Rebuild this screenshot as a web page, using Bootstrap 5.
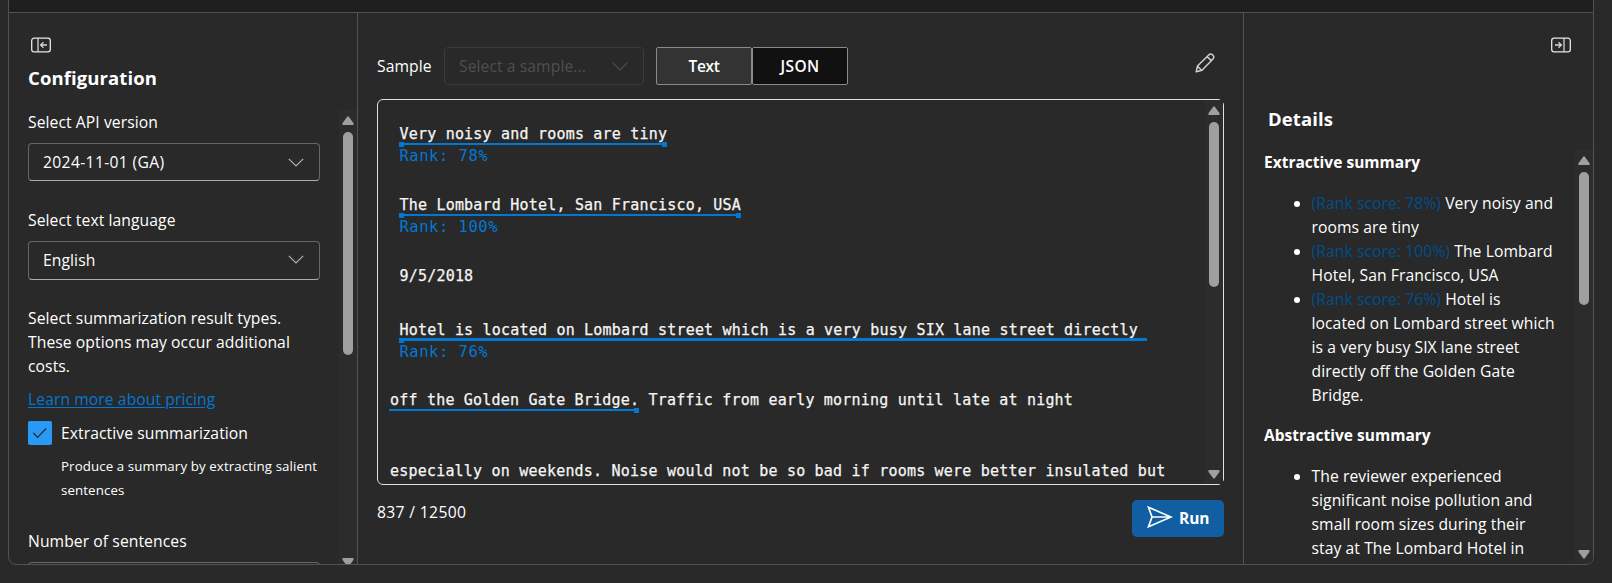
<!DOCTYPE html>
<html lang="en" data-bs-theme="dark">
<head>
<meta charset="utf-8">
<title>Summarization playground</title>
<link rel="stylesheet" href="https://cdn.jsdelivr.net/npm/bootstrap@5.3.0/dist/css/bootstrap.min.css">
<script src="https://cdn.jsdelivr.net/npm/bootstrap@5.3.0/dist/js/bootstrap.bundle.min.js"></script>
<style>
  html,body{height:583px;overflow:hidden}
  body{background:#292929;color:#fff;font-family:"Open Sans","Noto Sans",sans-serif;font-size:15.7px;line-height:24px;letter-spacing:.07px;padding:0 18px 0 8px;white-space:nowrap}
  .topstrip{height:12px;background:#1f1f1f;border:solid #525252;border-width:0 1px}
  .shell{height:553px;border:1px solid #525252;border-radius:0 0 8px 8px;overflow:hidden}
  .side-l{width:349px;border-right:1px solid #525252;padding-left:19px}
  .side-r{width:350px;border-left:1px solid #525252;padding-left:20px}
  .center{padding:34px 19px 0}
  .h-title{font-size:18.5px;line-height:28px;font-weight:700;letter-spacing:.1px;margin:0}
  .sub{font-size:15.5px;line-height:24px;font-weight:700;letter-spacing:.02px;margin:0}
  .pick{height:38px;border:1px solid #666;border-bottom-color:#adadad;border-radius:4px;padding:0 15px 0 14px}
  .pick.off{width:200px;border-color:#3b3b3b;color:#4f4f4f}
  .pick.tall{height:39px;padding-bottom:2px}
  .digits{letter-spacing:.33px}
  .form-w{width:292px}
  .view{width:96px;height:38px;border:1px solid #8a8a8a;border-radius:2px;background:#333;color:#fff;font-size:15.5px;font-weight:600;letter-spacing:-.35px;padding:1px 0 0;text-align:center;line-height:35px}
  .view.json{background:#111;letter-spacing:.4px}
  .tick{width:24px;height:24px;border-radius:2px;background:#2899f5}
  .note{font-size:13.3px;letter-spacing:.1px;margin:9px 0 27px 33px}
  .lnk{color:#0078d4;text-decoration:underline;text-underline-offset:2px}
  .sbar{width:18px;background:#2c2c2c;flex:none}
  .sbar svg{display:block;margin:6px 0 7px 3px}
  .thumb{width:10px;margin-left:4px;border-radius:5px;background:#9f9f9f}
  .sbar .down{margin:auto 0 5px 3px}
  .editor{height:386px;margin-top:14px;border:1px solid #e0e0e0;border-radius:6px;font-family:"DejaVu Sans Mono","Liberation Mono",monospace;font-size:15px;line-height:20px;letter-spacing:.2px;color:#f5f5f5;-webkit-text-stroke:.25px #f5f5f5}
  .editor .sbar{position:relative}
  .editor .sbar::before,.editor .sbar::after{content:"";position:absolute;right:-1px;width:4px;height:4px;background:#292929}
  .editor .sbar::before{top:-1px}
  .editor .sbar::after{bottom:-1px}
  .lines{padding:24px 0 0 12px}
  .ln{height:71px}
  .ind{padding-left:9.5px}
  .seg{position:relative;display:inline-block;white-space:pre;height:20px;vertical-align:top}
  .seg::before{content:"";position:absolute;left:-1px;right:0;top:19px;height:2px;background:#0078d4}
  .seg.thick::before{top:18px;height:3px}
  .seg i{position:absolute;top:18px;width:5px;height:5px;background:#0078d4}
  .seg i.s{left:-1px}
  .seg i.e{right:0}
  .rank{color:#0078d4;font-size:15.5px;letter-spacing:.52px;margin-top:2px;-webkit-text-stroke:0}
  .run{width:92px;height:37px;background:#115ea3;border-radius:5px;font-size:15.5px;font-weight:700;letter-spacing:-.1px;margin-top:15px;padding-left:15px}
  .res{margin:0;padding-left:47.500px}
  .res em{font-style:normal;color:#004e8c}
  .ic-left{margin-left:3px}
  #cfg{margin:11px 0 18px}
  #p1{margin:9px 0 27px}
  #p2{margin:9px 0 26px}
  #price{margin:9px 0 10px}
  #p3{margin-top:9px}
  #chkText{margin-left:1px}
  .t1{height:223px}
  .t2{height:165px}
  .t3{height:133px}
  .sbar .d1{margin-bottom:-3px}
  #sample{width:67px}
  #vt{margin-left:12px}
  #pen{margin-right:9px;margin-top:-6px}
  #date{height:54px}
  #hotel{height:70px}
  #count{margin-top:15px}
  #runText{margin:-1px 0 0 6px}
  #ricon{margin-right:22px}
  #det{margin:52px 0 17px 4px}
  #u1{margin:17px 0 16px}
  #u2{margin-top:17px}
</style>
</head>
<body>
<svg width="0" height="0" class="d-none">
  <symbol id="up" viewBox="0 0 12 9"><path d="M5 1q1-1.4 2 0l4.4 6.1q.9 1.9-1 1.9H1.600q-1.900 0-1-1.900z" fill="#9f9f9f"/></symbol>
  <symbol id="chev" viewBox="0 0 16 9"><path d="M.8.8 8 8l7.200-7.200" fill="none" stroke="currentColor" stroke-width="1.200"/></symbol>
  <symbol id="panel" viewBox="0 0 20 16"><rect x=".7" y="1.200" width="18.600" height="13.600" rx="2.400" fill="none" stroke="#e8e8e8" stroke-width="1.300"/><path d="M7 1v14M16 8h-6M12.500 5.300 9.600 8l2.900 2.700" fill="none" stroke="#d6d6d6" stroke-width="1.300"/></symbol>
</svg>
<div class="topstrip"></div>
<main class="shell d-flex">
  <aside class="side-l d-flex flex-column">
    <svg width="20" height="16" class="flex-shrink-0 mt-4 ic-left"><use href="#panel"/></svg>
    <h1 class="h-title" id="cfg">Configuration</h1>
    <div class="d-flex justify-content-between flex-grow-1 overflow-hidden">
      <div class="form-w">
        <div>Select API version</div>
        <div class="pick d-flex align-items-center justify-content-between" id="p1"><span class="digits">2024-11-01 (GA)</span><svg width="16" height="9" color="#b0b0b0"><use href="#chev"/></svg></div>
        <div>Select text language</div>
        <div class="pick tall d-flex align-items-center justify-content-between" id="p2"><span>English</span><svg width="16" height="9" color="#b0b0b0"><use href="#chev"/></svg></div>
        <div>Select summarization result types.<br>These options may occur additional<br>costs.</div>
        <div id="price"><a class="lnk" href="#">Learn more about pricing</a></div>
        <div class="d-flex"><span class="tick me-2"><svg class="d-block" width="24" height="24"><path d="m5.500 12 4 4.300 8.800-8.900" fill="none" stroke="#252525" stroke-width="1.200"/></svg></span><span id="chkText">Extractive summarization</span></div>
        <div class="note">Produce a summary by extracting salient<br>sentences</div>
        <div>Number of sentences</div>
        <div class="pick" id="p3"></div>
      </div>
      <div class="sbar d-flex flex-column"><svg width="12" height="9" class="flex-shrink-0"><use href="#up"/></svg><div class="thumb t1 flex-shrink-0"></div><svg class="down d1 flex-shrink-0" width="12" height="9"><g transform="rotate(180 6 4.500)"><use href="#up" width="12" height="9"/></g></svg></div>
    </div>
  </aside>
  <section class="center flex-grow-1">
    <div class="d-flex align-items-center">
      <span id="sample">Sample</span>
      <div class="pick off d-flex align-items-center justify-content-between"><span>Select a sample...</span><svg width="16" height="9"><use href="#chev"/></svg></div>
      <button class="view" id="vt">Text</button><button class="view json">JSON</button>
      <svg class="ms-auto" id="pen" width="20" height="20" viewBox="0 0 20 20"><path d="M1.200 18.800 2.500 13 14 1.700c2.500-2 6 1.300 4.200 4L7 17.300zM12.300 3.700l4.200 4.200M2.500 13.300l4.100 4" fill="none" stroke="#d0d0d0" stroke-width="1.500" stroke-linejoin="round"/></svg>
    </div>
    <div class="editor d-flex justify-content-between">
      <div class="lines overflow-hidden">
        <div class="ln ind"><span class="seg">Very noisy and rooms are tiny<i class="s"></i><i class="e"></i></span><div class="rank">Rank: 78%</div></div>
        <div class="ln ind"><span class="seg">The Lombard Hotel, San Francisco, USA<i class="s"></i><i class="e"></i></span><div class="rank">Rank: 100%</div></div>
        <div class="ln ind" id="date">9/5/2018</div>
        <div class="ln ind" id="hotel"><span class="seg thick">Hotel is located on Lombard street which is a very busy SIX lane street directly <i class="s"></i></span><div class="rank">Rank: 76%</div></div>
        <div class="ln"><span class="seg">off the Golden Gate Bridge.<i class="e"></i></span> Traffic from early morning until late at night</div>
        <div>especially on weekends. Noise would not be so bad if rooms were better insulated but</div>
      </div>
      <div class="sbar d-flex flex-column"><svg width="12" height="9" class="flex-shrink-0"><use href="#up"/></svg><div class="thumb t2"></div><svg class="down flex-shrink-0" width="12" height="9"><g transform="rotate(180 6 4.500)"><use href="#up" width="12" height="9"/></g></svg></div>
    </div>
    <div class="d-flex justify-content-between">
      <span id="count" class="digits">837 / 12500</span>
      <div class="run d-flex align-items-center"><svg width="26" height="22" viewBox="0 0 26 22" class="mb-1"><path d="M1.500 1.300 24 11 1.500 20.700 5 11zM5 11h18" fill="none" stroke="#fff" stroke-width="1.700"/></svg><span id="runText">Run</span></div>
    </div>
  </section>
  <aside class="side-r d-flex flex-column">
    <svg width="20" height="16" class="flex-shrink-0 align-self-end mt-4" id="ricon"><g transform="matrix(-1 0 0 1 20 0)"><use href="#panel" width="20" height="16"/></g></svg>
    <h2 class="h-title" id="det">Details</h2>
    <div class="d-flex justify-content-between flex-grow-1 overflow-hidden">
      <div>
        <h3 class="sub">Extractive summary</h3>
        <ul class="res" id="u1">
          <li><em>(Rank score: 78%)</em> Very noisy and<br>rooms are tiny</li>
          <li><em>(Rank score: 100%)</em> The Lombard<br>Hotel, San Francisco, USA</li>
          <li><em>(Rank score: 76%)</em> Hotel is<br>located on Lombard street which<br>is a very busy SIX lane street<br>directly off the Golden Gate<br>Bridge.</li>
        </ul>
        <h3 class="sub">Abstractive summary</h3>
        <ul class="res" id="u2"><li>The reviewer experienced<br>significant noise pollution and<br>small room sizes during their<br>stay at The Lombard Hotel in</li></ul>
      </div>
      <div class="sbar d-flex flex-column"><svg width="12" height="9" class="flex-shrink-0"><use href="#up"/></svg><div class="thumb t3"></div><svg class="down flex-shrink-0" width="12" height="9"><g transform="rotate(180 6 4.500)"><use href="#up" width="12" height="9"/></g></svg></div>
    </div>
  </aside>
</main>
</body>
</html>
